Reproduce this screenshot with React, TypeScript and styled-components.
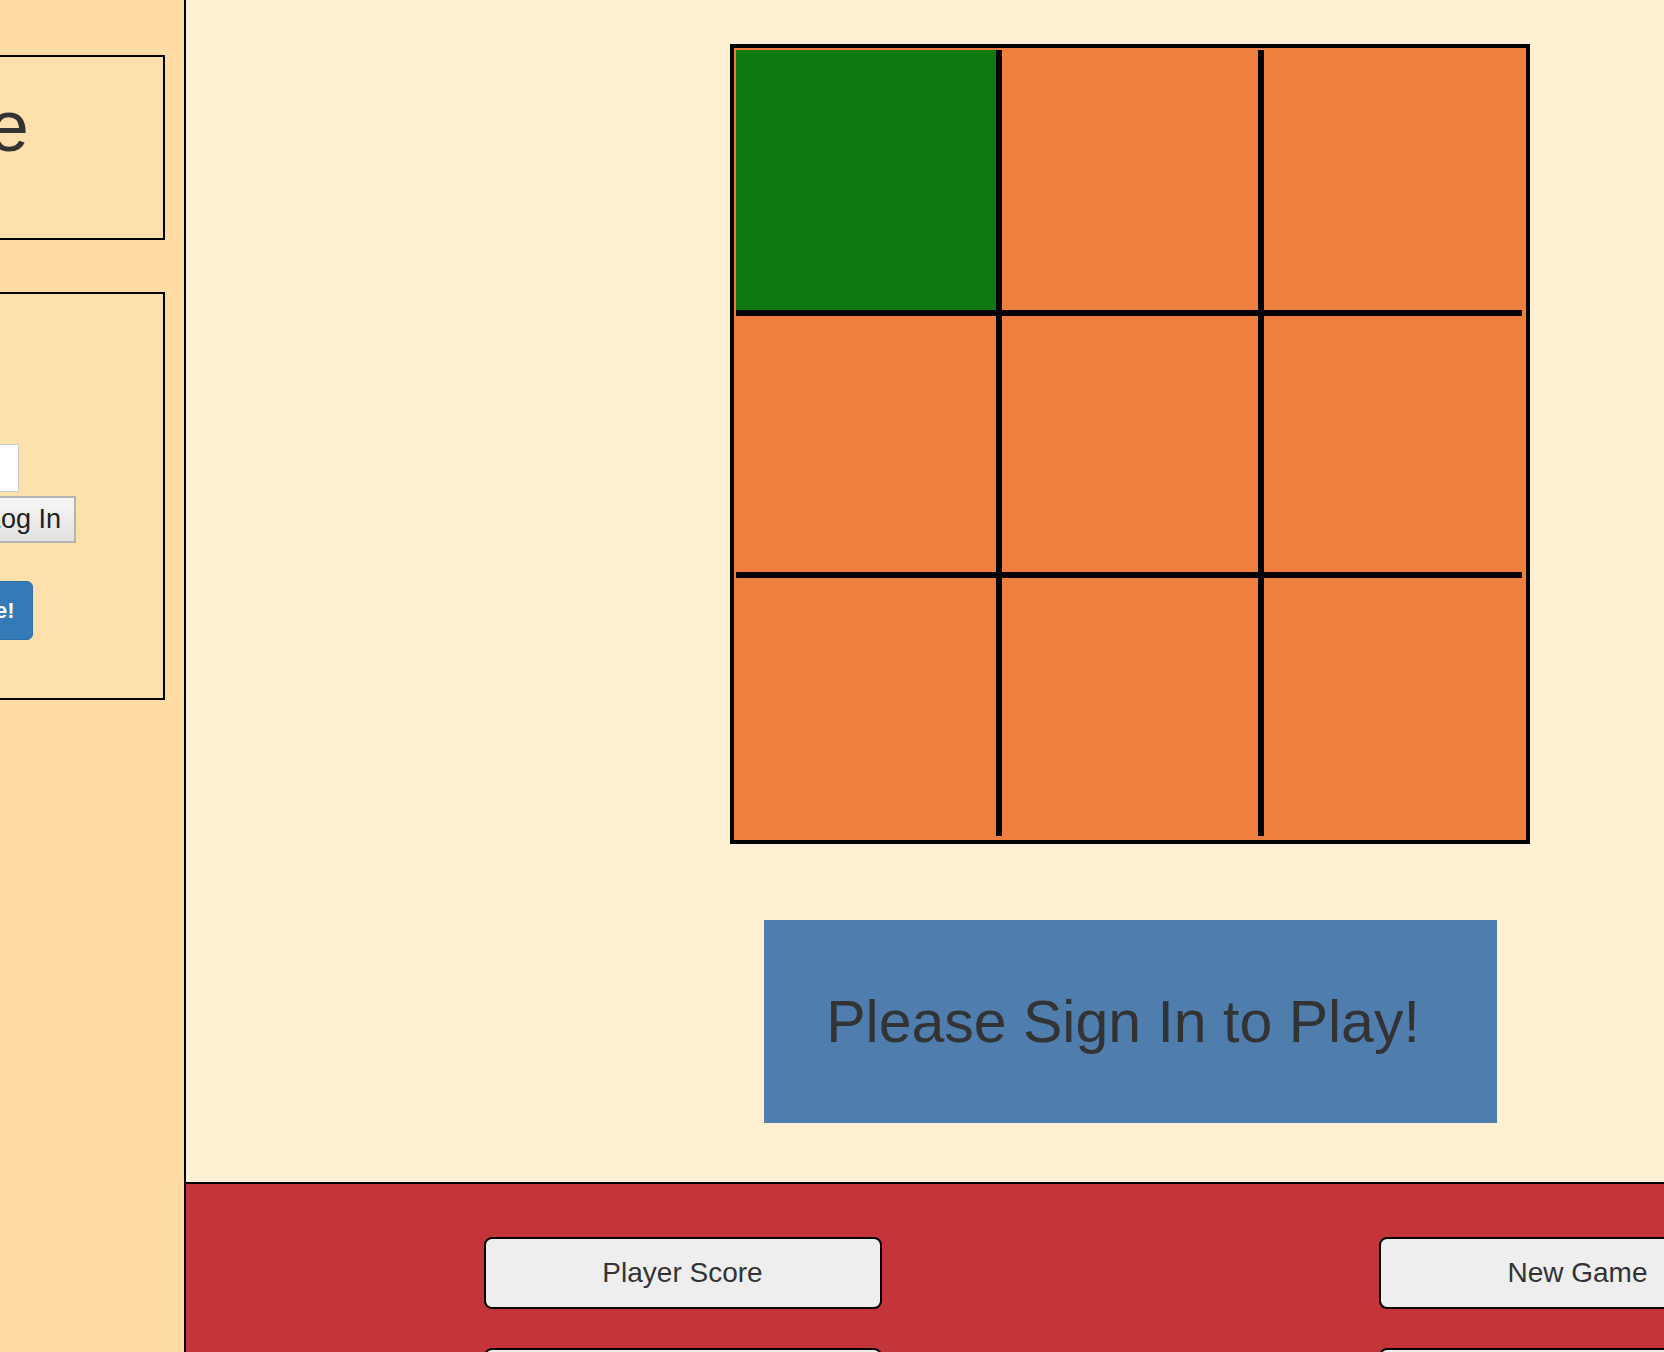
import React from "react";
import styled, { createGlobalStyle } from "styled-components";

const GlobalStyle = createGlobalStyle`
  html, body {
    margin: 0;
    padding: 0;
    overflow: hidden;
    background: #ffefd3;
    font-family: "Liberation Sans", Arial, Helvetica, sans-serif;
  }
  * { box-sizing: border-box; }
`;

const Page = styled.div`
  display: flex;
  width: 2488px;
  min-height: 1352px;
  margin-left: -414px;
`;

const Sidebar = styled.aside`
  width: 600px;
  flex: none;
  background: #ffdca4;
  border-right: 2px solid #000;
  padding: 55px 19px 0 20px;
  display: flex;
  flex-direction: column;
  gap: 52px;
`;

const Panel = styled.section<{ $height: number }>`
  height: ${(p) => p.$height}px;
  border: 2px solid #000;
  background: #fee0ad;
  padding: 0 0 0 62px;
  display: flex;
  flex-direction: column;
  align-items: flex-start;
`;

const Title = styled.h1`
  margin: 30px 0 0;
  font-size: 72px;
  line-height: 79px;
  font-weight: 400;
  color: #333;
  white-space: nowrap;
`;

const PanelHeading = styled.h2`
  margin: 20px 0 0;
  font-size: 28px;
  line-height: 40px;
  font-weight: 400;
  color: #333;
`;

const Label = styled.label`
  margin-top: 16px;
  font-size: 16px;
  line-height: 20px;
  color: #333;
`;

const TextInput = styled.input`
  margin-top: 54px;
  width: 349px;
  height: 48px;
  border: 1px solid #ccc;
  background: #fff;
  padding: 0 10px;
  font-size: 20px;
`;

const FormRow = styled.div<{ $top: number; $gap: number }>`
  margin-top: ${(p) => p.$top}px;
  display: flex;
  align-items: center;
  gap: ${(p) => p.$gap}px;
`;

const HiddenInput = styled.input`
  width: 281px;
  height: 47px;
  border: 1px solid #ccc;
  background: #fff;
`;

const LogInButton = styled.button`
  height: 47px;
  padding: 0 13px;
  border: 2px solid #b4b4b4;
  background: linear-gradient(#f6f6f6, #e2e2e2);
  font-family: "Liberation Sans", Arial, sans-serif;
  font-size: 27px;
  line-height: 31px;
  color: #222;
`;

const RowText = styled.span`
  width: 166px;
  font-size: 18px;
  color: #333;
  white-space: nowrap;
  overflow: hidden;
`;

const SignUpButton = styled.button`
  height: 59px;
  padding: 0 18px;
  border: 1px solid #2e6da4;
  border-radius: 6px;
  background: #337ab7;
  color: #fff;
  font-family: "Liberation Sans", Arial, sans-serif;
  font-size: 22px;
  font-weight: 700;
  white-space: nowrap;
`;

const Main = styled.main`
  width: 1888px;
  flex: none;
  display: flex;
  flex-direction: column;
`;

const Stage = styled.div`
  height: 1182px;
  display: flex;
  flex-direction: column;
  align-items: center;
  background: #ffefd3;
`;

const Board = styled.div`
  margin-top: 44px;
  width: 800px;
  height: 800px;
  border: 4px solid #000;
  background: #ef7f3e;
  padding: 2px;
  display: grid;
  grid-template-columns: 266px 262px 258px;
  grid-template-rows: 266px 262px 258px;
`;

const Cell = styled.div<{ $taken: boolean; $lastCol: boolean; $lastRow: boolean }>`
  background: ${(p) => (p.$taken ? "#0e7b12" : "#ef7f3e")};
  border-right: ${(p) => (p.$lastCol ? "none" : "6px solid #000")};
  border-bottom: ${(p) => (p.$lastRow ? "none" : "6px solid #000")};
`;

const Message = styled.div`
  margin-top: 76px;
  width: 733px;
  height: 203px;
  background: #4f7dae;
  display: flex;
  align-items: center;
  justify-content: center;
  padding-right: 14px;
  font-size: 59px;
  color: #333;
  white-space: nowrap;
`;

const Footer = styled.footer`
  flex: 1;
  background: #c4353a;
  border-top: 2px solid #000;
  padding-top: 53px;
  display: grid;
  grid-template-columns: 398px 398px;
  grid-auto-rows: 72px;
  column-gap: 497px;
  row-gap: 39px;
  justify-content: center;
  align-content: start;
`;

const FooterButton = styled.button`
  border: 2px solid #000;
  border-radius: 8px;
  background: #eeeeee;
  font-family: "Liberation Sans", Arial, sans-serif;
  font-size: 28px;
  color: #333;
`;

const cells = Array.from({ length: 9 }, (_, i) => i);

export default function App() {
  return (
    <>
      <GlobalStyle />
      <Page>
        <Sidebar>
          <Panel $height={185}>
            <Title>Tic Tac Toe</Title>
          </Panel>
          <Panel $height={408}>
            <PanelHeading>Sign In</PanelHeading>
            <Label>Username</Label>
            <TextInput type="text" />
            <FormRow $top={4} $gap={20}>
              <HiddenInput type="password" />
              <LogInButton>Log In</LogInButton>
            </FormRow>
            <FormRow $top={38} $gap={14}>
              <RowText>New player?</RowText>
              <SignUpButton>Sign Up Here!</SignUpButton>
            </FormRow>
          </Panel>
        </Sidebar>
        <Main>
          <Stage>
            <Board>
              {cells.map((i) => (
                <Cell
                  key={i}
                  $taken={i === 0}
                  $lastCol={i % 3 === 2}
                  $lastRow={i >= 6}
                />
              ))}
            </Board>
            <Message>Please Sign In to Play!</Message>
          </Stage>
          <Footer>
            <FooterButton>Player Score</FooterButton>
            <FooterButton>New Game</FooterButton>
            <FooterButton>Games Played</FooterButton>
            <FooterButton>Sign Out</FooterButton>
          </Footer>
        </Main>
      </Page>
    </>
  );
}
